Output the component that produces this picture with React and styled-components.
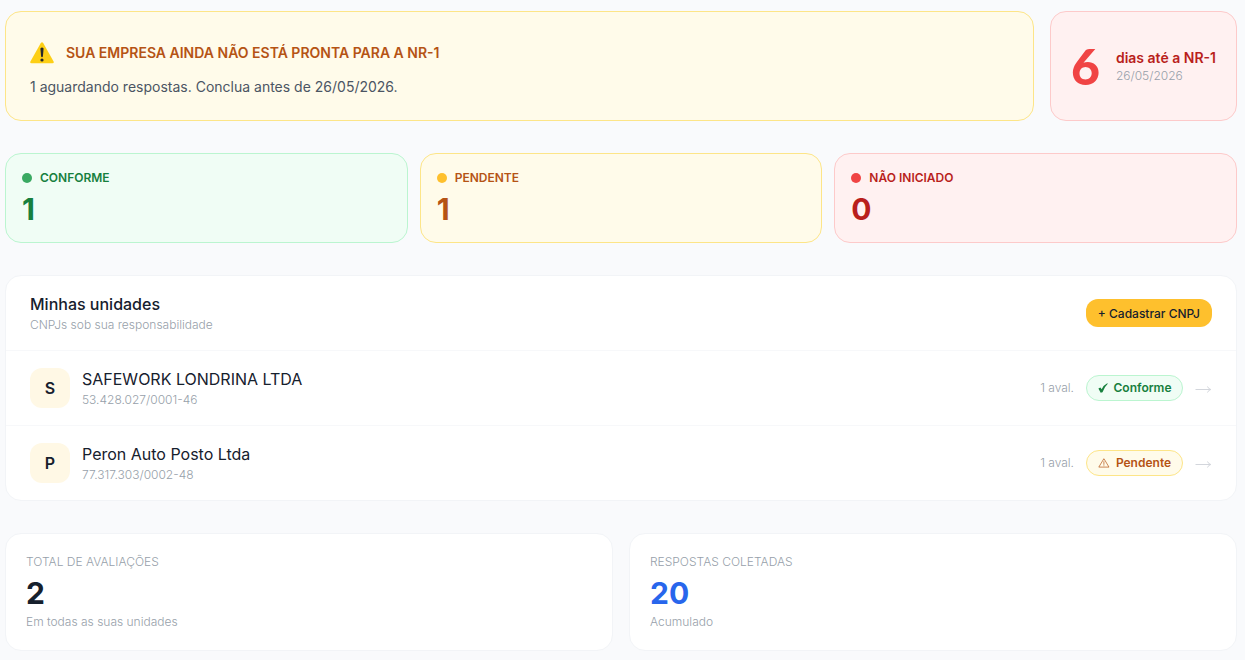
import styled, { createGlobalStyle } from "styled-components";

const GlobalStyle = createGlobalStyle`
  * {
    box-sizing: border-box;
  }
  body {
    margin: 0;
    background: #f9fafc;
    color: #16202d;
    font-family: Inter, "Open Sans", "Liberation Sans", sans-serif;
    font-size: 14px;
  }
  h1, h2, p, ul {
    margin: 0;
    padding: 0;
  }
`;

const tones = {
  green: { bg: "#f0fdf5", border: "#bbf5d0", text: "#17803e", dot: "#3aa962" },
  yellow: { bg: "#fffbea", border: "#fde588", text: "#b55314", dot: "#fec02d" },
  red: { bg: "#fff1f1", border: "#fdcaca", text: "#b91f1c", dot: "#f04444" },
};

const Page = styled.main`
  display: flex;
  flex-direction: column;
  gap: 32px;
  padding: 11px 8px 9px 5px;
`;
const TopRow = styled.section`
  display: flex;
  gap: 16px;
`;
const ToneCard = styled.div`
  border: 1px solid ${({ $tone }) => tones[$tone].border};
  border-radius: 16px;
  background: ${({ $tone }) => tones[$tone].bg};
`;
const Banner = styled(ToneCard)`
  flex: 1;
  padding: 25px 24px 23px;
`;
const BannerHead = styled.div`
  display: flex;
  align-items: center;
  gap: 12px;
  height: 32px;
  margin-bottom: 8px;
`;
const BannerTitle = styled.h1`
  font-size: 14px;
  font-weight: 600;
  line-height: 20px;
  color: #b55314;
`;
const BannerText = styled.p`
  line-height: 20px;
  color: #4b5563;
`;
const Countdown = styled(ToneCard)`
  display: flex;
  align-items: center;
  gap: 16px;
  padding: 20px;
`;
const Days = styled.strong`
  font-family: Lato, sans-serif;
  font-size: 50px;
  font-weight: 900;
  line-height: 52px;
  color: #f04444;
`;
const CountdownTitle = styled.p`
  font-size: 14px;
  font-weight: 600;
  line-height: 20px;
  color: #b91f1c;
`;
const Muted = styled.p`
  font-size: 12px;
  font-weight: 300;
  line-height: ${({ $line }) => $line || 16}px;
  color: #979faa;
`;
const StatusRow = styled.section`
  display: grid;
  grid-template-columns: repeat(3, 1fr);
  gap: 12px;
`;
const StatusCard = styled(ToneCard)`
  padding: 16px;
  color: ${({ $tone }) => tones[$tone].text};
`;
const StatusLabel = styled.p`
  display: flex;
  align-items: center;
  gap: 8px;
  font-size: 12px;
  font-weight: 600;
  line-height: 16px;
`;
const Dot = styled.span`
  width: 10px;
  height: 10px;
  border-radius: 50%;
  background: ${({ $tone }) => tones[$tone].dot};
`;
const Value = styled.p`
  margin-top: 6px;
  font-size: 30px;
  font-weight: 700;
  line-height: 34px;
  color: ${({ $color }) => $color || "inherit"};
`;
const Panel = styled.section`
  border: 1px solid #f2f4f7;
  border-radius: 16px;
  background: #fff;
`;
const PanelHead = styled.header`
  display: flex;
  align-items: center;
  justify-content: space-between;
  padding: 16px 24px;
`;
const PanelTitle = styled.h2`
  font-size: 16px;
  font-weight: 500;
  line-height: 24px;
`;
const AddButton = styled.button`
  height: 28px;
  padding: 0 12px;
  border: 0;
  border-radius: 12px;
  background: #fec02d;
  color: #16202d;
  font: 500 12px Inter, sans-serif;
  cursor: pointer;
`;
const UnitList = styled.ul`
  list-style: none;
`;
const UnitLink = styled.a`
  display: flex;
  align-items: center;
  gap: 12px;
  padding: 16px 24px;
  border-top: 1px solid #f7f8fa;
  color: inherit;
  text-decoration: none;
`;
const Avatar = styled.span`
  display: grid;
  place-items: center;
  width: 40px;
  height: 40px;
  border-radius: 12px;
  background: #fff8e5;
  font-size: 16px;
  font-weight: 600;
`;
const UnitInfo = styled.div`
  flex: 1;
`;
const UnitName = styled.p`
  font-size: 16px;
  line-height: 24px;
`;
const Chip = styled.span`
  display: flex;
  align-items: center;
  justify-content: center;
  gap: 6px;
  min-width: 97px;
  height: 26px;
  padding: 0 10px;
  border: 1px solid ${({ $tone }) => tones[$tone].border};
  border-radius: 13px;
  background: ${({ $tone }) => tones[$tone].bg};
  color: ${({ $tone }) => tones[$tone].text};
  font-size: 12px;
  font-weight: 600;
  line-height: 16px;
`;
const TotalsRow = styled.section`
  display: grid;
  grid-template-columns: repeat(2, 1fr);
  gap: 16px;
`;
const TotalCard = styled(Panel)`
  padding: 20px;
`;
const Note = styled(Muted)`
  margin-top: 4px;
`;

const WarningIcon = () => (
  <svg width="24" height="22" viewBox="0 0 24 22" aria-hidden="true">
    <path d="M10.7 1.3Q12-.6 13.3 1.3L23.6 19.5Q24.3 21.3 22.5 21.3H1.5Q-.3 21.3.4 19.5Z" fill="#fdcf16" />
    <path d="M10.4 6.4Q12 4.6 13.6 6.4L12.9 14.6Q12 15.8 11.1 14.6Z" fill="#26292c" />
    <circle cx="12" cy="18" r="1.6" fill="#26292c" />
  </svg>
);

const CheckIcon = () => (
  <svg width="10" height="10" viewBox="0 0 10 10" aria-hidden="true">
    <path d="M.4 5.4 2.4 4.4 3.7 6.2Q5.6 2 9.2.2L9.8.8Q6.4 3.8 4.5 9.3L2.7 9.7Z" fill="currentColor" />
  </svg>
);

const AlertIcon = () => (
  <svg width="12" height="10" viewBox="0 0 12 10" fill="none" stroke="currentColor" strokeWidth="0.7" aria-hidden="true">
    <path d="M5.8.8.8 9.1H11L6 .8Z" strokeLinejoin="round" />
    <path d="M5.9 3.2V6.8M5.9 7.4V8.2" />
  </svg>
);

const ArrowIcon = () => (
  <svg width="17" height="10" viewBox="0 0 17 10" fill="none" stroke="#d3d6dc" aria-hidden="true">
    <path d="M.5 6.5H15.5M12.5 3.5Q13.4 5.9 15.8 6.5Q13.4 7.1 12.5 9.5" />
  </svg>
);

const statuses = [
  { label: "CONFORME", value: 1, tone: "green" },
  { label: "PENDENTE", value: 1, tone: "yellow" },
  { label: "NÃO INICIADO", value: 0, tone: "red" },
];

const units = [
  { name: "SAFEWORK LONDRINA LTDA", cnpj: "53.428.027/0001-46", status: "Conforme", tone: "green" },
  { name: "Peron Auto Posto Ltda", cnpj: "77.317.303/0002-48", status: "Pendente", tone: "yellow" },
];

const totals = [
  { label: "TOTAL DE AVALIAÇÕES", value: 2, note: "Em todas as suas unidades", color: "#16202d" },
  { label: "RESPOSTAS COLETADAS", value: 20, note: "Acumulado", color: "#2866ec" },
];

const Unit = ({ name, cnpj, status, tone }) => {
  return (
    <li>
      <UnitLink href="#">
        <Avatar>{name[0]}</Avatar>
        <UnitInfo>
          <UnitName>{name}</UnitName>
          <Muted $line={18}>{cnpj}</Muted>
        </UnitInfo>
        <Muted>1 aval.</Muted>
        <Chip $tone={tone}>
          {tone === "green" ? <CheckIcon /> : <AlertIcon />}
          {status}
        </Chip>
        <ArrowIcon />
      </UnitLink>
    </li>
  );
};

export default function App() {
  return (
    <>
      <GlobalStyle />
      <Page>
        <TopRow>
          <Banner $tone="yellow">
            <BannerHead>
              <WarningIcon />
              <BannerTitle>SUA EMPRESA AINDA NÃO ESTÁ PRONTA PARA A NR-1</BannerTitle>
            </BannerHead>
            <BannerText>1 aguardando respostas. Conclua antes de 26/05/2026.</BannerText>
          </Banner>
          <Countdown $tone="red">
            <Days>6</Days>
            <div>
              <CountdownTitle>dias até a NR-1</CountdownTitle>
              <Muted>26/05/2026</Muted>
            </div>
          </Countdown>
        </TopRow>
        <StatusRow>
          {statuses.map(({ label, value, tone }) => (
            <StatusCard key={label} $tone={tone}>
              <StatusLabel>
                <Dot $tone={tone} />
                {label}
              </StatusLabel>
              <Value>{value}</Value>
            </StatusCard>
          ))}
        </StatusRow>
        <Panel>
          <PanelHead>
            <div>
              <PanelTitle>Minhas unidades</PanelTitle>
              <Muted $line={18}>CNPJs sob sua responsabilidade</Muted>
            </div>
            <AddButton type="button">+ Cadastrar CNPJ</AddButton>
          </PanelHead>
          <UnitList>
            {units.map((unit) => (
              <Unit key={unit.cnpj} {...unit} />
            ))}
          </UnitList>
        </Panel>
        <TotalsRow>
          {totals.map(({ label, value, note, color }) => (
            <TotalCard key={label}>
              <Muted>{label}</Muted>
              <Value $color={color}>{value}</Value>
              <Note>{note}</Note>
            </TotalCard>
          ))}
        </TotalsRow>
      </Page>
    </>
  );
}
